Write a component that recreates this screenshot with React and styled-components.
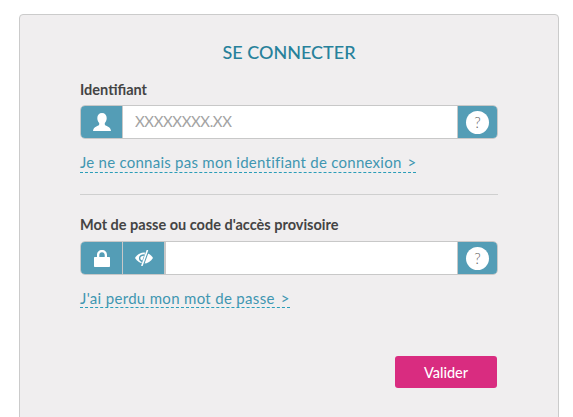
import styled, { createGlobalStyle } from "styled-components";

const GlobalStyle = createGlobalStyle`
  html, body {
    margin: 0;
    padding: 0;
    height: 100%;
    overflow: hidden;
    background: #fff;
    font-family: "Lato", "Liberation Sans", sans-serif;
  }
`;

const Page = styled.div`
  height: 417px;
  overflow: hidden;
  padding: 14px 14px 0 19px;
  box-sizing: border-box;
`;

const Card = styled.form`
  height: 440px;
  box-sizing: border-box;
  background: #f0eeef;
  border: 1px solid #cbcbcb;
  border-radius: 4px;
  padding: 27px 60px 0 60px;
`;

const Title = styled.h1`
  margin: 0 0 19px;
  height: 20px;
  line-height: 20px;
  text-align: center;
  font-size: 18px;
  font-weight: 500;
  color: #27819b;
`;

const Label = styled.label`
  display: block;
  height: 18px;
  line-height: 18px;
  margin-bottom: ${(p) => p.$gap || 6}px;
  font-size: 14.5px;
  font-weight: 700;
  color: #444;
`;

const Field = styled.div`
  display: flex;
  height: 34px;
  box-sizing: border-box;
  border: 1px solid #c8c8c8;
  border-radius: 5px;
  overflow: hidden;
  background: #fff;
`;

const IconCell = styled.span`
  flex: none;
  width: 41px;
  display: flex;
  align-items: center;
  justify-content: center;
  background: #549db6;
  border-right: ${(p) => p.$divider || 1}px solid #c8c8c8;
`;

const HelpCell = styled(IconCell)`
  width: 39px;
  border-right: 0;
  border-left: 1px solid #c8c8c8;
`;

const HelpBubble = styled.span`
  width: 23px;
  height: 23px;
  border-radius: 50%;
  background: #fff;
  color: #666;
  font-size: 15px;
  font-weight: 300;
  line-height: 23px;
  text-align: center;
`;

const TextInput = styled.input`
  flex: 1;
  min-width: 0;
  border: 0;
  outline: 0;
  padding: 0 12px 2px;
  background: #fff;
  font-family: "Lato", "Liberation Sans", sans-serif;
  font-size: 15px;
  letter-spacing: -0.4px;
  color: #444;
  &::placeholder {
    color: #a3a3a3;
    opacity: 1;
  }
`;

const HelpLink = styled.a`
  display: inline-block;
  margin-top: 15px;
  height: ${(p) => p.$height || 18}px;
  line-height: 17px;
  border-bottom: 1px dashed #2a9db8;
  font-size: 15px;
  letter-spacing: ${(p) => p.$spacing || 0.25}px;
  color: #3f96b1;
  text-decoration: none;
`;

const Chevron = styled.span`
  margin-left: 6px;
`;

const Divider = styled.hr`
  margin: 21px 0 21px;
  border: 0;
  border-top: 1px solid #cfcfcf;
`;

const Actions = styled.div`
  display: flex;
  justify-content: flex-end;
  margin-top: 48px;
  padding-right: 1px;
`;

const Submit = styled.button`
  width: 102px;
  height: 32px;
  border: 0;
  border-radius: 3px;
  background: #d92c80;
  color: #fff;
  font-family: "Lato", "Liberation Sans", sans-serif;
  font-size: 14.5px;
  font-weight: 500;
`;

const UserIcon = () => (
  <svg width="18" height="18" viewBox="0 0 18 18" fill="#fff">
    <path d="M9 0C11.900 0 13.700 2 13.700 5C13.700 7 13 8.800 11.800 9.900V11.200C11.800 12 12.400 12.300 13.300 12.800L16 14.300C17.200 15 17.700 16.300 18 18H0C.3 16.300 .8 15 2 14.300L4.700 12.800C5.600 12.300 6.200 12 6.200 11.200V9.900C5 8.800 4.300 7 4.300 5C4.300 2 6.100 0 9 0Z" />
  </svg>
);

const LockIcon = () => (
  <svg width="16" height="17" viewBox="0 0 16 17" fill="#fff">
    <path
      fillRule="evenodd"
      d="M3 7V5C3 2 5 0 8 0C11 0 13 2 13 5V7H15C15.600 7 16 7.400 16 8V16C16 16.600 15.600 17 15 17H1C.4 17 0 16.600 0 16V8C0 7.400 .4 7 1 7ZM5.300 7H10.700V5C10.700 3.300 9.700 2.200 8 2.200C6.300 2.200 5.300 3.300 5.300 5Z"
    />
  </svg>
);

const HiddenEyeIcon = () => (
  <svg width="18" height="16" viewBox="0 0 18 16">
    <path d="M0 8C2 4.500 5.500 2.500 9 2.500C12.500 2.500 16 4.500 18 8C16 11.500 12.500 13.500 9 13.500C5.500 13.500 2 11.500 0 8Z" fill="#fff" />
    <path d="M9 5C6.500 5 4.600 6.400 4.600 8.200C4.600 9.800 5.800 11 7.400 11.500" fill="none" stroke="#549db6" strokeWidth="1.400" />
    <path d="M12.800 0L7 16" stroke="#549db6" strokeWidth="3.200" />
    <path d="M12.500 0L6.800 16" stroke="#fff" strokeWidth="1.600" />
  </svg>
);

const Help = () => (
  <HelpCell>
    <HelpBubble>?</HelpBubble>
  </HelpCell>
);

export default function App() {
  return (
    <>
      <GlobalStyle />
      <Page>
        <Card onSubmit={(e) => e.preventDefault()}>
          <Title>SE CONNECTER</Title>

          <Label>Identifiant</Label>
          <Field>
            <IconCell>
              <UserIcon />
            </IconCell>
            <TextInput placeholder="XXXXXXXX.XX" />
            <Help />
          </Field>
          <HelpLink href="#">
            Je ne connais pas mon identifiant de connexion<Chevron>&gt;</Chevron>
          </HelpLink>

          <Divider />

          <Label $gap={7}>Mot de passe ou code d'accès provisoire</Label>
          <Field>
            <IconCell>
              <LockIcon />
            </IconCell>
            <IconCell $divider={2}>
              <HiddenEyeIcon />
            </IconCell>
            <TextInput type="password" />
            <Help />
          </Field>
          <HelpLink href="#" $height={17} $spacing={0.32}>
            J'ai perdu mon mot de passe<Chevron>&gt;</Chevron>
          </HelpLink>

          <Actions>
            <Submit type="submit">Valider</Submit>
          </Actions>
        </Card>
      </Page>
    </>
  );
}
